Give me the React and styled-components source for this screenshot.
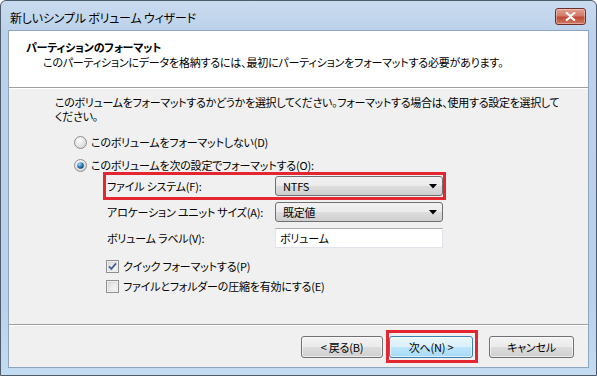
import React from "react";
import styled, { createGlobalStyle, css } from "styled-components";

const GlobalStyle = createGlobalStyle`
  html, body {
    margin: 0;
    padding: 0;
    background: #ffffff;
  }
  body {
    font-family: "Noto Sans CJK JP", "Noto Sans", sans-serif;
    font-size: 11px;
    letter-spacing: -0.2px;
    font-feature-settings: "palt";
    color: #000;
    white-space: nowrap;
  }
`;

const Window = styled.div`
  box-sizing: border-box;
  width: 597px;
  height: 376px;
  display: flex;
  flex-direction: column;
  border: 1px solid #4d5b6b;
  border-radius: 6px 6px 0 0;
  background: linear-gradient(#c9dbef 0px, #bcd2ea 30px, #b9d1ea 300px, #c3dcf1 100%);
  padding: 0 7px 7px;
  overflow: hidden;
`;

const TitleBar = styled.div`
  height: 29px;
  display: flex;
  align-items: center;
  justify-content: space-between;
  padding: 0 3px 0 2px;
`;

const Title = styled.span`
  font-size: 12px;
  margin-top: 3px;
`;

const CloseButton = styled.div`
  box-sizing: border-box;
  width: 31px;
  height: 17px;
  margin-top: 2px;
  display: flex;
  align-items: center;
  justify-content: center;
  border: 1px solid #6d2e2a;
  border-radius: 3px;
  background: linear-gradient(#e3a191 0%, #d27a69 45%, #bf4a36 55%, #cf7a63 100%);
  box-shadow: inset 0 0 0 1px rgba(255, 255, 255, 0.35);
`;

const Client = styled.div`
  flex: 1;
  display: flex;
  flex-direction: column;
  background: #f0f0f0;
  border: 1px solid #8ea5bf;
`;

const Header = styled.div`
  height: 57px;
  background: #ffffff;
  border-bottom: 1px solid #a0a0a0;
  box-shadow: 0 1px 0 #ffffff;
  padding: 9px 0 0 17px;
  box-sizing: border-box;
`;

const HeaderTitle = styled.div`
  font-weight: bold;
  line-height: 14px;
`;

const HeaderSub = styled.div`
  line-height: 16px;
  padding-left: 17px;
`;

const Body = styled.div`
  flex: 1;
  padding: 7px 0 0 46px;
`;

const Intro = styled.p`
  margin: 0;
  line-height: 14px;
  letter-spacing: -0.3px;
`;

const OptionRow = styled.label`
  display: flex;
  align-items: center;
  gap: 4px;
  height: 16px;
  margin-left: ${(p) => p.$indent || 0}px;
  margin-top: ${(p) => p.$top || 0}px;
`;

const Settings = styled.div`
  display: flex;
  flex-direction: column;
  gap: 4px;
  margin: 2px 0 0 51px;
  width: 337px;
`;

const SettingRow = styled.div`
  display: grid;
  grid-template-columns: 168px 168px;
  align-items: center;
  height: 22px;
  padding-left: 1px;
  ${(p) =>
    p.$marked &&
    css`
      outline: 3px solid #e3262f;
    `}
`;

const Combo = styled.div`
  box-sizing: border-box;
  height: 20px;
  width: 168px;
  display: flex;
  align-items: center;
  justify-content: space-between;
  padding: 0 5px 0 7px;
  border: 1px solid #707070;
  border-radius: 3px;
  background: linear-gradient(#f2f2f2 0%, #ebebeb 50%, #dddddd 50%, #cfcfcf 100%);
`;

const TextBox = styled.div`
  box-sizing: border-box;
  height: 20px;
  width: 168px;
  padding: 0 4px;
  display: flex;
  align-items: center;
  background: #ffffff;
  border: 1px solid #e2e3ea;
  border-top-color: #abadb3;
`;

const Checks = styled.div`
  margin: 9px 0 0 51px;
  display: flex;
  flex-direction: column;
  gap: 4px;
`;

const Footer = styled.div`
  height: 43px;
  box-sizing: border-box;
  border-top: 1px solid #a0a0a0;
  box-shadow: inset 0 1px 0 #ffffff;
  display: flex;
  justify-content: flex-end;
  align-items: flex-start;
  padding: 11px 14px 0 0;
`;

const Marker = styled.div`
  display: flex;
  margin: -6px 0 0 ${(p) => p.$gap}px;
  padding: 3px 2px 2px 0;
  border: 3px solid #e3262f;
`;

const Button = styled.div`
  box-sizing: border-box;
  width: ${(p) => p.$w}px;
  height: 22px;
  margin-left: ${(p) => p.$gap || 0}px;
  display: flex;
  align-items: center;
  justify-content: center;
  border: 1px solid ${(p) => (p.$default ? "#3c7fb1" : "#707070")};
  border-radius: 3px;
  background: ${(p) =>
    p.$default
      ? "linear-gradient(#eaf6fd 0%, #d9f0fc 50%, #bee6fd 50%, #a7d9f5 100%)"
      : "linear-gradient(#f2f2f2 0%, #ebebeb 50%, #dddddd 50%, #cfcfcf 100%)"};
  box-shadow: inset 0 0 0 1px rgba(255, 255, 255, 0.6);
`;

const Arrow = () => (
  <svg width="8" height="5" viewBox="0 0 8 5">
    <path d="M0 0 H8 L4 4.5 Z" fill="#000" />
  </svg>
);

const Radio = ({ checked }) => (
  <svg width="13" height="13" viewBox="0 0 13 13">
    <defs>
      <radialGradient id={checked ? "rOn" : "rOff"} cx="0.4" cy="0.35" r="0.7">
        <stop offset="0" stopColor="#ffffff" />
        <stop offset="1" stopColor="#d2d2d2" />
      </radialGradient>
      <radialGradient id="dot" cx="0.35" cy="0.3" r="0.75">
        <stop offset="0" stopColor="#a6dcf7" />
        <stop offset="0.5" stopColor="#3a86c0" />
        <stop offset="1" stopColor="#0f3d66" />
      </radialGradient>
    </defs>
    <circle cx="6.5" cy="6.5" r="6" fill={`url(#${checked ? "rOn" : "rOff"})`} stroke="#8f8f8f" />
    {checked && <circle cx="6.5" cy="6.5" r="3.3" fill="url(#dot)" />}
  </svg>
);

const Checkbox = ({ checked }) => (
  <svg width="13" height="13" viewBox="0 0 13 13">
    <defs>
      <linearGradient id="cb" x1="0" y1="0" x2="1" y2="1">
        <stop offset="0" stopColor="#dcdcdc" />
        <stop offset="1" stopColor="#fbfbfb" />
      </linearGradient>
    </defs>
    <rect x="0.5" y="0.5" width="12" height="12" fill="#fff" stroke="#8e8f8f" />
    <rect x="2" y="2" width="9" height="9" fill="url(#cb)" stroke="#c4c4c4" strokeWidth="0.5" />
    {checked && (
      <path d="M3 6.3 L5.4 8.8 L10 3.4" fill="none" stroke="#4a5f97" strokeWidth="1.8" />
    )}
  </svg>
);

export default function App() {
  return (
    <>
      <GlobalStyle />
      <Window>
        <TitleBar>
          <Title>新しいシンプル ボリューム ウィザード</Title>
          <CloseButton>
            <svg width="11" height="9" viewBox="0 0 11 9">
              <path
                d="M1 0.5 L5.5 4 L10 0.5 M1 8.5 L5.5 5 L10 8.5"
                stroke="#ffffff"
                strokeWidth="2.2"
                fill="none"
              />
            </svg>
          </CloseButton>
        </TitleBar>
        <Client>
          <Header>
            <HeaderTitle>パーティションのフォーマット</HeaderTitle>
            <HeaderSub>
              このパーティションにデータを格納するには、最初にパーティションをフォーマットする必要があります。
            </HeaderSub>
          </Header>
          <Body>
            <Intro>
              このボリュームをフォーマットするかどうかを選択してください。フォーマットする場合は、使用する設定を選択して
              <br />
              ください。
            </Intro>
            <OptionRow $indent={19} $top={11}>
              <Radio />
              このボリュームをフォーマットしない(D)
            </OptionRow>
            <OptionRow $indent={19} $top={7}>
              <Radio checked />
              このボリュームを次の設定でフォーマットする(O):
            </OptionRow>
            <Settings>
              <SettingRow $marked>
                <span>ファイル システム(F):</span>
                <Combo>
                  <span>NTFS</span>
                  <Arrow />
                </Combo>
              </SettingRow>
              <SettingRow>
                <span>アロケーション ユニット サイズ(A):</span>
                <Combo>
                  <span>既定値</span>
                  <Arrow />
                </Combo>
              </SettingRow>
              <SettingRow>
                <span>ボリューム ラベル(V):</span>
                <TextBox>ボリューム</TextBox>
              </SettingRow>
            </Settings>
            <Checks>
              <OptionRow>
                <Checkbox checked />
                クイック フォーマットする(P)
              </OptionRow>
              <OptionRow>
                <Checkbox />
                ファイルとフォルダーの圧縮を有効にする(E)
              </OptionRow>
            </Checks>
          </Body>
          <Footer>
            <Button $w={82}>&lt; 戻る(B)</Button>
            <Marker $gap={3}>
              <Button $w={84} $default>
                次へ(N) &gt;
              </Button>
            </Marker>
            <Button $w={85} $gap={11}>キャンセル</Button>
          </Footer>
        </Client>
      </Window>
    </>
  );
}
